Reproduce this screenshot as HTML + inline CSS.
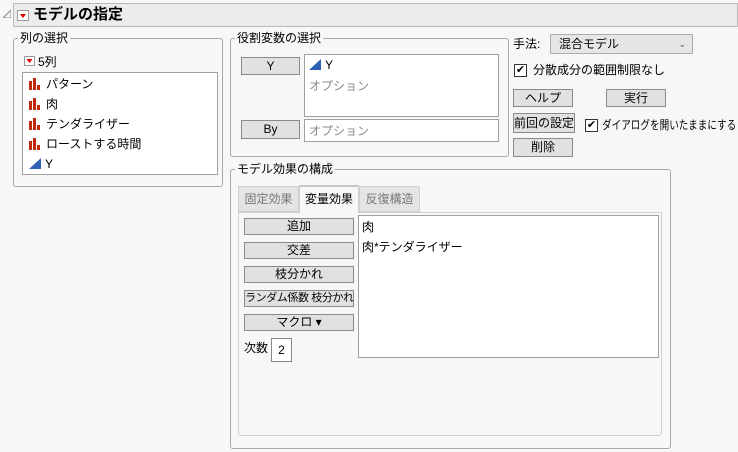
<!DOCTYPE html>
<html><head><meta charset="utf-8"><style>
*{box-sizing:border-box;margin:0;padding:0}
body{width:738px;height:452px;background:#f7f7f7;font-family:"Liberation Sans","Noto Sans CJK JP",sans-serif;font-size:12px;color:#000;position:relative;overflow:hidden}
.a{position:absolute;white-space:nowrap}
.grp{position:absolute;border:1px solid #a8a8a8;border-radius:3px}
.lg{position:absolute;background:#f7f7f7;padding:0 2px;font-size:12px;line-height:14px;white-space:nowrap}
.box{position:absolute;background:#fff;border:1px solid #a0a0a0}
.btn{position:absolute;background:#e1e1e1;border:1px solid #8a8a8a;text-align:center;font-size:12px;white-space:nowrap;overflow:hidden}
.it{position:absolute;left:6px;font-size:12px;line-height:14px;white-space:nowrap}
.bar{display:inline-block;vertical-align:-2px;margin-right:6px;width:11px;height:12px;position:relative}
.bar i{position:absolute;bottom:0;background:#c0280a;width:3px}
.cb{position:absolute;width:13px;height:13px;border:1px solid #333;background:#fff;font-size:11px;line-height:11px;text-align:center}
.gray{color:#8a8a8a}
</style></head><body>
<svg class="a" style="left:3px;top:10px" width="8" height="8"><path d="M0 8 L8 8 L8 0 Z" fill="none" stroke="#888"/></svg>
<div class="a" style="left:13px;top:3px;width:725px;height:24px;background:#ececec;border:1px solid #b8b8b8"></div>
<div class="a" style="left:17px;top:10px;width:12px;height:11px;background:#fff;border:1px solid #999"><svg width="10" height="9" style="position:absolute;left:0;top:0"><path d="M2 3 L8 3 L5 7 Z" fill="#d00"/></svg></div>
<div class="a" style="left:33px;top:5px;font-size:15px;font-weight:bold;line-height:20px">モデルの指定</div>

<div class="grp" style="left:13px;top:38px;width:210px;height:149px"></div>
<div class="lg" style="left:18px;top:31px">列の選択</div>
<div class="a" style="left:24px;top:56px;width:11px;height:10px;background:#fff;border:1px solid #999"><svg width="9" height="8" style="position:absolute;left:0;top:0"><path d="M1.5 2 L7.5 2 L4.5 6 Z" fill="#d00"/></svg></div>
<div class="a" style="left:38px;top:55px;line-height:14px">5列</div>
<div class="box" style="left:22px;top:72px;width:196px;height:103px">
<div class="it" style="top:4px"><span class="bar"><i style="left:0;height:9px"></i><i style="left:4px;height:12px"></i><i style="left:8px;height:5px"></i></span>パターン</div>
<div class="it" style="top:24px"><span class="bar"><i style="left:0;height:9px"></i><i style="left:4px;height:12px"></i><i style="left:8px;height:5px"></i></span>肉</div>
<div class="it" style="top:44px"><span class="bar"><i style="left:0;height:9px"></i><i style="left:4px;height:12px"></i><i style="left:8px;height:5px"></i></span>テンダライザー</div>
<div class="it" style="top:64px"><span class="bar"><i style="left:0;height:9px"></i><i style="left:4px;height:12px"></i><i style="left:8px;height:5px"></i></span>ローストする時間</div>
<div class="it" style="top:84px"><svg width="12" height="11" style="vertical-align:-1px;margin-right:4px"><path d="M0 11 L12 11 L12 0 Z" fill="#2f5eb5"/></svg>Y</div>
</div>

<div class="grp" style="left:230px;top:38px;width:279px;height:119px"></div>
<div class="lg" style="left:235px;top:31px">役割変数の選択</div>
<div class="btn" style="left:241px;top:57px;width:59px;height:18px;line-height:16px">Y</div>
<div class="box" style="left:304px;top:54px;width:195px;height:63px">
<div class="it" style="left:4px;top:3px"><svg width="12" height="11" style="vertical-align:-1px;margin-right:4px"><path d="M0 11 L12 11 L12 0 Z" fill="#2f5eb5"/></svg>Y</div>
<div class="it gray" style="left:4px;top:24px">オプション</div></div>
<div class="btn" style="left:241px;top:120px;width:59px;height:19px;line-height:17px">By</div>
<div class="box" style="left:304px;top:119px;width:195px;height:23px"><div class="it gray" style="left:4px;top:4px">オプション</div></div>

<div class="a" style="left:513px;top:37px;line-height:14px">手法:</div>
<div class="a" style="left:550px;top:34px;width:143px;height:20px;background:#e6e6e6;border:1px solid #adadad;padding-left:8px;line-height:18px">混合モデル<span style="position:absolute;right:6px;top:0;font-size:9px;color:#555">&#8964;</span></div>
<div class="cb" style="left:514px;top:64px">✔</div>
<div class="a" style="left:533px;top:63px;line-height:14px">分散成分の範囲制限なし</div>
<div class="btn" style="left:513px;top:89px;width:60px;height:18px;line-height:16px">ヘルプ</div>
<div class="btn" style="left:606px;top:89px;width:60px;height:18px;line-height:16px">実行</div>
<div class="btn" style="left:513px;top:113px;width:62px;height:20px;line-height:18px">前回の設定</div>
<div class="cb" style="left:585px;top:119px">✔</div>
<div class="a" style="left:602px;top:118px;line-height:14px;transform:scaleX(0.8);transform-origin:left">ダイアログを開いたままにする</div>
<div class="btn" style="left:513px;top:138px;width:60px;height:19px;line-height:17px">削除</div>

<div class="grp" style="left:230px;top:169px;width:441px;height:280px"></div>
<div class="lg" style="left:235px;top:162px">モデル効果の構成</div>
<div class="a" style="left:238px;top:212px;width:424px;height:224px;border:1px solid #d0d0d0;border-radius:0 0 3px 3px"></div>
<div class="a" style="left:238px;top:186px;width:61px;height:26px;background:#e4e4e4;border:1px solid #d0d0d0;color:#777;text-align:center;line-height:24px">固定効果</div>
<div class="a" style="left:299px;top:185px;width:60px;height:28px;background:#f7f7f7;border:1px solid #d0d0d0;border-top:2px solid #c8c8c8;border-bottom:none;text-align:center;line-height:25px">変量効果</div>
<div class="a" style="left:359px;top:186px;width:61px;height:26px;background:#e4e4e4;border:1px solid #d0d0d0;color:#777;text-align:center;line-height:24px">反復構造</div>
<div class="btn" style="left:244px;top:218px;width:110px;height:17px;line-height:15px">追加</div>
<div class="btn" style="left:244px;top:242px;width:110px;height:17px;line-height:15px">交差</div>
<div class="btn" style="left:244px;top:266px;width:110px;height:17px;line-height:15px">枝分かれ</div>
<div class="btn" style="left:244px;top:290px;width:110px;height:17px;line-height:15px;font-size:11px;letter-spacing:-0.4px">ランダム係数 枝分かれ</div>
<div class="btn" style="left:244px;top:314px;width:110px;height:17px;line-height:15px">マクロ ▾</div>
<div class="a" style="left:244px;top:341px;line-height:14px">次数</div>
<div class="box" style="left:271px;top:338px;width:21px;height:24px;border-color:#888;text-align:center;line-height:22px">2</div>
<div class="box" style="left:358px;top:215px;width:301px;height:143px">
<div class="it" style="left:3px;top:4px">肉</div>
<div class="it" style="left:3px;top:24px">肉*テンダライザー</div></div>
</body></html>
